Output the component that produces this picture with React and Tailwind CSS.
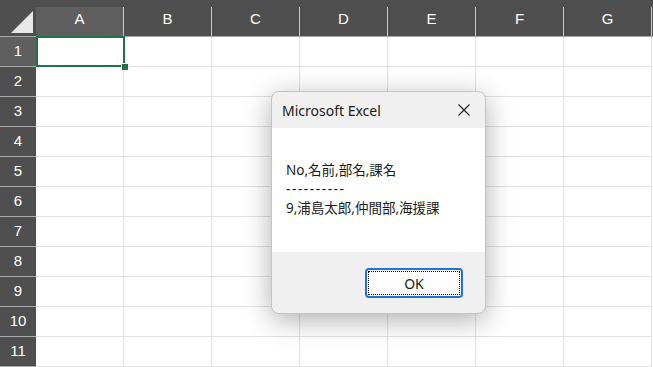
import React from "react";

const cols = ["A", "B", "C", "D", "E", "F", "G"];
const rows = [1, 2, 3, 4, 5, 6, 7, 8, 9, 10, 11];

export default function App() {
  return (
    <div className="relative w-[653px] h-[367px] overflow-hidden bg-white font-['Liberation_Sans',sans-serif]">
      {/* column headers */}
      <div className="flex h-[37px] bg-[#4f4f4f] border-b border-[#a9a9a9]">
        <div className="w-[36px] shrink-0 flex items-end justify-end pr-[3px] pb-[3px]">
          <svg width="22" height="22" viewBox="0 0 22 22">
            <polygon points="22,0 22,22 0,22" fill="#e8e8e8" />
          </svg>
        </div>
        {cols.map((c) => (
          <div
            key={c}
            className={
              c === "A"
                ? "w-[88px] shrink-0 mt-[7px] border-r border-[#c9c9c9] bg-[#5f5f5f] flex justify-center pt-[1px] text-[15px] text-white"
                : "w-[88px] shrink-0 mt-[7px] border-r border-[#c9c9c9] flex justify-center pt-[1px] text-[15px] text-white"
            }
          >
            {c}
          </div>
        ))}
      </div>

      {/* body */}
      {rows.map((r) => (
        <div key={r} className="flex h-[30px]">
          <div
            className={
              r === 1
                ? "w-[36px] shrink-0 bg-[#5f5f5f] border-b border-[#a9a9a9] flex items-center justify-center text-[15px] text-white"
                : "w-[36px] shrink-0 bg-[#4f4f4f] border-b border-[#a9a9a9] flex items-center justify-center text-[15px] text-white"
            }
          >
            {r}
          </div>
          {cols.map((c) => (
            <div key={c} className="w-[88px] shrink-0 border-r border-b border-[#e1e1e1]" />
          ))}
        </div>
      ))}

      {/* selected cell A1 */}
      <div className="absolute left-[36px] top-[36px] w-[89px] h-[31px] border-2 border-[#217346]" />
      <div className="absolute left-[121px] top-[63px] w-[8px] h-[8px] bg-[#217346] border border-white" />

      {/* message box */}
      <div className="absolute left-[271px] top-[91px] w-[215px] h-[223px] flex flex-col rounded-[8px] overflow-hidden border border-[#c4c4c4] bg-[#f0f0f0] shadow-[0_6px_28px_rgba(0,0,0,0.32)] font-['Noto_Sans','Noto_Sans_CJK_JP',sans-serif] text-[#1b1b1b]">
        <div className="h-[36px] shrink-0 flex items-center justify-between pl-[10px] pr-[15px]">
          <span className="text-[14px]">Microsoft Excel</span>
          <svg width="12" height="12" viewBox="0 0 12 12">
            <path d="M0.5 0.5 L11.5 11.5 M11.5 0.5 L0.5 11.5" stroke="#1b1b1b" strokeWidth="1.1" />
          </svg>
        </div>
        <div className="h-[124px] shrink-0 bg-white pl-[14px] pt-[33px] text-[13.5px] leading-[19px]">
          <div>No,名前,部名,課名</div>
          <div className="tracking-[1.6px]">----------</div>
          <div>9,浦島太郎,仲間部,海援課</div>
        </div>
        <div className="flex-1 flex justify-end items-start pt-[16px] pr-[22px]">
          <div className="relative w-[98px] h-[30px] rounded-[4px] border-2 border-[#1f74d0] bg-[#fdfdfd] flex items-center justify-center text-[14px]">
            <div className="absolute inset-[1px] border border-dotted border-black" />
            OK
          </div>
        </div>
      </div>
    </div>
  );
}
